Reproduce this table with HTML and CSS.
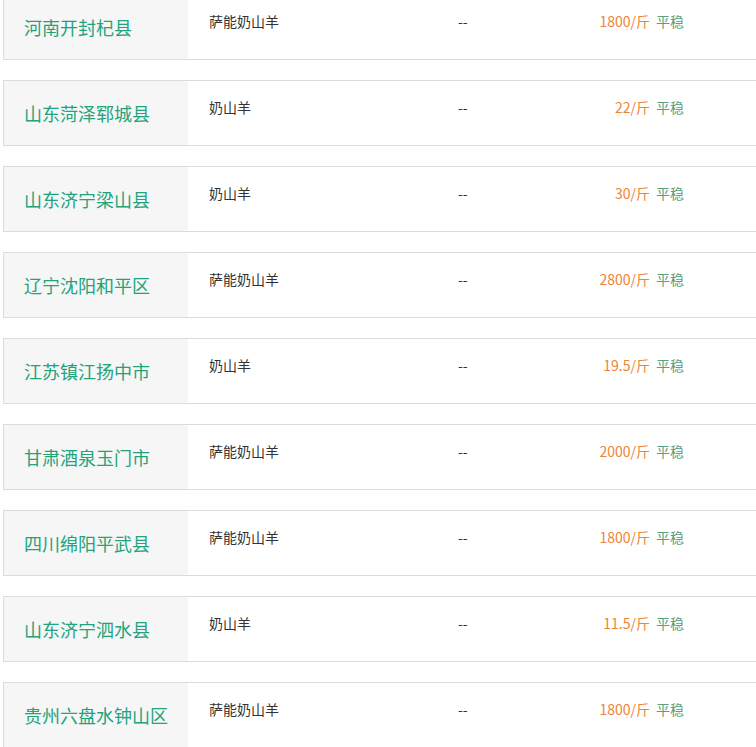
FILE: index.html
```html
<!DOCTYPE html>
<html lang="zh">
<head>
<meta charset="utf-8">
<link rel="stylesheet" href="styles.css">
</head>
<body>
<div class="list">
  <div class="row"><div class="area">河南开封杞县</div><div class="kind">萨能奶山羊</div><div class="dash">--</div><div class="price">1800/斤</div><div class="trend">平稳</div></div>
  <div class="row"><div class="area">山东菏泽郓城县</div><div class="kind">奶山羊</div><div class="dash">--</div><div class="price">22/斤</div><div class="trend">平稳</div></div>
  <div class="row"><div class="area">山东济宁梁山县</div><div class="kind">奶山羊</div><div class="dash">--</div><div class="price">30/斤</div><div class="trend">平稳</div></div>
  <div class="row"><div class="area">辽宁沈阳和平区</div><div class="kind">萨能奶山羊</div><div class="dash">--</div><div class="price">2800/斤</div><div class="trend">平稳</div></div>
  <div class="row"><div class="area">江苏镇江扬中市</div><div class="kind">奶山羊</div><div class="dash">--</div><div class="price">19.5/斤</div><div class="trend">平稳</div></div>
  <div class="row"><div class="area">甘肃酒泉玉门市</div><div class="kind">萨能奶山羊</div><div class="dash">--</div><div class="price">2000/斤</div><div class="trend">平稳</div></div>
  <div class="row"><div class="area">四川绵阳平武县</div><div class="kind">萨能奶山羊</div><div class="dash">--</div><div class="price">1800/斤</div><div class="trend">平稳</div></div>
  <div class="row"><div class="area">山东济宁泗水县</div><div class="kind">奶山羊</div><div class="dash">--</div><div class="price">11.5/斤</div><div class="trend">平稳</div></div>
  <div class="row"><div class="area">贵州六盘水钟山区</div><div class="kind">萨能奶山羊</div><div class="dash">--</div><div class="price">1800/斤</div><div class="trend">平稳</div></div>
</div>
</body>
</html>
```
FILE: styles.css
```css
html, body {
  margin: 0;
  padding: 0;
  background: #fff;
  overflow: hidden;
}
body {
  font-family: "Noto Sans CJK SC", "Noto Sans", sans-serif;
}
.list {
  margin-top: -6px;
  padding-left: 3px;
  display: flex;
  flex-direction: column;
  gap: 20px;
}
.row {
  display: flex;
  height: 64px;
  border: 1px solid #dcdcdc;
  border-right: 0;
  background: #fff;
}
.area {
  width: 164px;
  flex: none;
  background: #f6f6f6;
  padding-left: 20px;
  display: flex;
  align-items: center;
  font-size: 18px;
  color: #22a37c;
  padding-bottom: 1px;
  box-sizing: content-box;
}
.kind, .dash, .price, .trend {
  padding-top: 16px;
  font-size: 14px;
  line-height: 20px;
}
.kind {
  width: 249px;
  padding-left: 21px;
  color: #333;
  flex: none;
}
.dash {
  width: 100px;
  flex: none;
  color: #333;
}
.price {
  width: 92px;
  flex: none;
  text-align: right;
  color: #ee8436;
}
.trend {
  margin-left: 6px;
  color: #5a9f80;
}
```
